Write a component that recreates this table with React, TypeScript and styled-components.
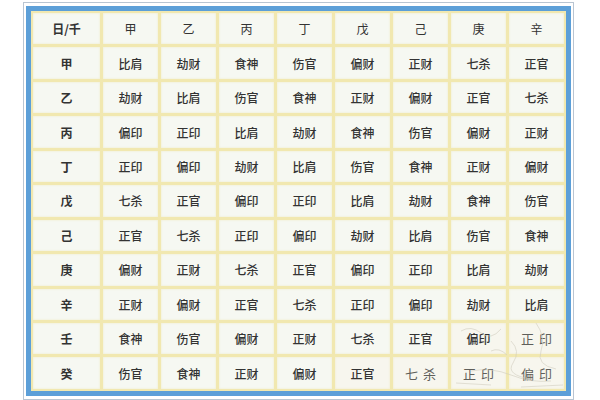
import React from "react";
import styled, { createGlobalStyle } from "styled-components";

const Global = createGlobalStyle`
  html, body { margin: 0; padding: 0; background: #ffffff; }
  body { font-family: "Noto Sans CJK SC", "Noto Sans", sans-serif; }
`;

const Outer = styled.div`
  margin: 2px 0 0 23px;
  width: max-content;
  border: 1px solid #b9c5d2;
  padding: 3px 2px;
  background: #ffffff;
`;

const Frame = styled.div`
  position: relative;
  border: 5px solid #5c9fd8;
  box-shadow: inset 0 0 0 1px #7fb6e4;
  background: #f1e8b0;
`;

const Grid = styled.div`
  display: grid;
  grid-template-columns: 67px repeat(8, 55px);
  grid-auto-rows: 31.45px;
  gap: 3px;
  padding: 2px;
  width: 535px;
  height: 380px;
  box-sizing: border-box;
  background: #f1e8b0;
`;

type Kind = "stem" | "colhead" | "body" | "script";

const weights: Record<Kind, number> = { stem: 700, colhead: 400, body: 500, script: 400 };

const Cell = styled.div<{ $kind?: Kind; $fade?: boolean }>`
  display: flex;
  align-items: center;
  justify-content: center;
  background: ${(p) => (p.$fade ? "#f7f6ee" : "#f6f8f2")};
  color: ${(p) => (p.$kind === "script" ? "#5f5f5a" : "#333333")};
  font-size: ${(p) => (p.$kind === "script" ? "13px" : "12px")};
  font-weight: ${(p) => weights[p.$kind ?? "body"]};
  letter-spacing: ${(p) => (p.$kind === "script" ? "5px" : "0")};
  padding-left: ${(p) => (p.$kind === "script" ? "5px" : "0")};
  box-shadow: inset 0 0 2px rgba(235, 222, 150, 0.5);
`;

const Sketch = styled.svg`
  position: absolute;
  right: 0;
  bottom: 0;
  width: 115px;
  height: 80px;
  pointer-events: none;
`;

const stems = ["甲", "乙", "丙", "丁", "戊", "己", "庚", "辛", "壬", "癸"];

const rows: string[][] = [
  ["比肩", "劫财", "食神", "伤官", "偏财", "正财", "七杀", "正官"],
  ["劫财", "比肩", "伤官", "食神", "正财", "偏财", "正官", "七杀"],
  ["偏印", "正印", "比肩", "劫财", "食神", "伤官", "偏财", "正财"],
  ["正印", "偏印", "劫财", "比肩", "伤官", "食神", "正财", "偏财"],
  ["七杀", "正官", "偏印", "正印", "比肩", "劫财", "食神", "伤官"],
  ["正官", "七杀", "正印", "偏印", "劫财", "比肩", "伤官", "食神"],
  ["偏财", "正财", "七杀", "正官", "偏印", "正印", "比肩", "劫财"],
  ["正财", "偏财", "正官", "七杀", "正印", "偏印", "劫财", "比肩"],
  ["食神", "伤官", "偏财", "正财", "七杀", "正官", "偏印", "正印"],
  ["伤官", "食神", "正财", "偏财", "正官", "七杀", "正印", "偏印"],
];

const scriptCells = new Set(["8-7", "9-5", "9-6", "9-7"]);
const fadeCells = new Set(["8-6", "8-7", "9-4", "9-5", "9-6", "9-7"]);

export default function App() {
  return (
    <>
      <Global />
      <Outer>
        <Frame>
          <Grid>
            <Cell $kind="stem">日/千</Cell>
            {stems.slice(0, 8).map((s) => (
              <Cell key={s} $kind="colhead">
                {s}
              </Cell>
            ))}
            {rows.map((r, ri) => (
              <React.Fragment key={ri}>
                <Cell $kind="stem">{stems[ri]}</Cell>
                {r.map((v, ci) => {
                  const k = `${ri}-${ci}`;
                  return (
                    <Cell
                      key={k}
                      $kind={scriptCells.has(k) ? "script" : "body"}
                      $fade={fadeCells.has(k)}
                    >
                      {v}
                    </Cell>
                  );
                })}
              </React.Fragment>
            ))}
          </Grid>
          <Sketch viewBox="0 0 115 80">
            <g fill="none" stroke="#cfccbc" strokeWidth="0.8" opacity="0.7">
              <path d="M10 20 Q20 14 30 22 T50 18" />
              <path d="M60 30 Q70 40 62 52 T80 68" />
              <path d="M20 60 Q40 56 60 64 T100 70" />
              <path d="M85 12 Q95 26 90 40 T105 58" />
              <path d="M40 40 Q48 36 56 44" />
              <path d="M5 72 L40 74 M70 76 L112 74" />
            </g>
          </Sketch>
        </Frame>
      </Outer>
    </>
  );
}
